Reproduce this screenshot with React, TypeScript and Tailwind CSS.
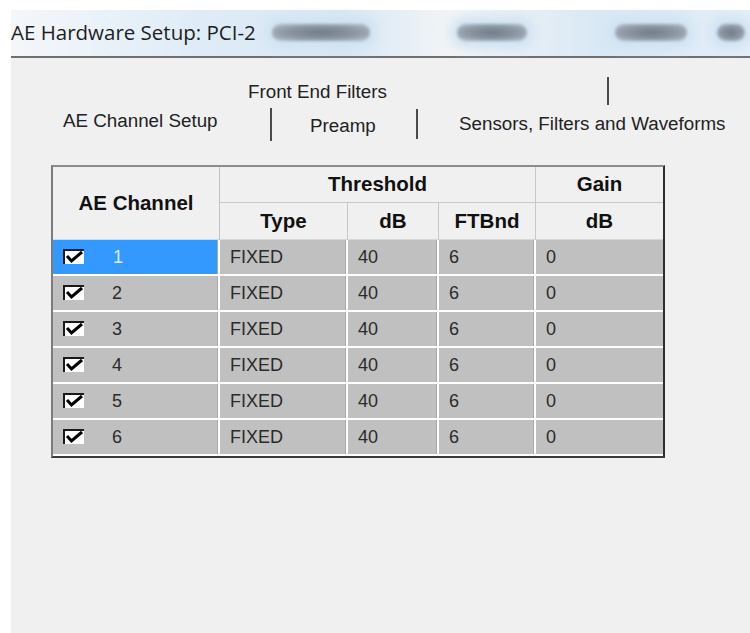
import React from "react";

const rows = [1, 2, 3, 4, 5, 6].map((n) => ({
  channel: n,
  type: "FIXED",
  db: "40",
  ftbnd: "6",
  gain: "0",
}));

// classic sunken check box with a heavy tick
function CheckBox() {
  return (
    <svg width="22" height="16" viewBox="0 0 22 16" className="shrink-0">
      <rect x="1" y="1" width="20" height="14" fill="#ffffff" />
      <path d="M1 15 V1 H21" fill="none" stroke="#1a1a1a" strokeWidth="2" />
      <path d="M4 7 L8.5 12 L19 3" fill="none" stroke="#000000" strokeWidth="3" strokeLinejoin="miter" />
    </svg>
  );
}

function Blob({ className }: { className: string }) {
  return (
    <div
      className={`h-[17px] shrink-0 rounded-full bg-[radial-gradient(ellipse_at_center,#6f7b88_0%,#8e99a5_55%,#b9c6d2_100%)] blur-[1.5px] shadow-[0_0_12px_7px_#cfe2f2] ${className}`}
    />
  );
}

function Sep({ h }: { h: string }) {
  return <div className={`w-[2px] ${h} bg-[#4a4a4a] shrink-0`} />;
}

export default function App() {
  const hdr = "bg-[#f0f0f0] text-[20.5px] font-bold text-[#111] text-center align-middle";
  const cellBase = "pl-[10px] text-left text-[18px] border-b-2 border-white";
  const grey = "bg-[#c0c0c0] text-[#2b2b2b]";
  const divider = "shadow-[inset_-2px_0_0_#ffffff,inset_-3px_0_0_#a9a9a9]";
  const cell = `${cellBase} ${grey} ${divider}`;

  return (
    <div
      className="w-[750px] h-[633px] bg-white pt-[10px] pl-[11px] flex flex-col overflow-hidden"
      style={{ fontFamily: '"Liberation Sans", Arial, sans-serif' }}
    >
      {/* window caption */}
      <div className="h-[46px] shrink-0 flex items-center pb-[2px] bg-[linear-gradient(90deg,#f4f7fa_0%,#dfecf7_25%,#d8e8f5_45%,#f3f5f6_60%,#d8e8f5_80%,#e4eff8_100%)]">
        <div
          className="w-[261px] shrink-0 text-[20.5px] text-[#1e1e1e] whitespace-nowrap"
          style={{ fontFamily: '"Open Sans", "Noto Sans", sans-serif' }}
        >
          AE Hardware Setup: PCI-2
        </div>
        <Blob className="w-[98px]" />
        <Blob className="ml-[87px] w-[70px]" />
        <Blob className="ml-[88px] w-[72px]" />
        <Blob className="ml-[30px] w-[28px]" />
      </div>
      <div className="h-[2px] shrink-0 bg-[#6f6f6f]" />

      {/* dialog body */}
      <div className="flex-1 bg-[#f0f0f1] flex flex-col">
        {/* tab strip, two rows */}
        <div className="text-[18.8px] text-[#222]">
          <div className="mt-[19px] h-[28px] flex items-center">
            <div className="w-[237px] shrink-0" />
            <div className="w-[359px] shrink-0 mt-[2px]">Front End Filters</div>
            <Sep h="h-[28px]" />
          </div>
          <div className="mt-[2px] h-[34px] flex items-center">
            <div className="w-[52px] shrink-0" />
            <div className="w-[207px] shrink-0 -mt-[6px]">AE Channel Setup</div>
            <Sep h="h-[33px]" />
            <div className="w-[144px] shrink-0 pl-[38px] mt-[4px]">Preamp</div>
            <Sep h="h-[30px]" />
            <div className="pl-[41px] whitespace-nowrap">Sensors, Filters and Waveforms</div>
          </div>
        </div>

        {/* channel grid */}
        <div className="ml-[40px] mt-[24px] w-[614px] border-2 border-l-[#7c7c7c] border-t-[#8c8c8c] border-r-[#2e2e2e] border-b-[#3c3c3c]">
          <table className="border-separate border-spacing-0 w-[610px] table-fixed">
            <colgroup>
              <col className="w-[167px]" />
              <col className="w-[128px]" />
              <col className="w-[91px]" />
              <col className="w-[97px]" />
              <col className="w-[127px]" />
            </colgroup>
            <thead>
              <tr className="h-[36px]">
                <th rowSpan={2} className={`${hdr} border-r border-[#c4c4c4] border-b border-b-[#d8d8d8]`}>
                  AE Channel
                </th>
                <th colSpan={3} className={`${hdr} border-r border-b border-[#c8c8c8]`}>
                  Threshold
                </th>
                <th className={`${hdr} border-b border-[#c8c8c8]`}>Gain</th>
              </tr>
              <tr className="h-[37px]">
                <th className={`${hdr} border-r border-b border-[#c8c8c8] border-b-[#d8d8d8]`}>Type</th>
                <th className={`${hdr} border-r border-b border-[#c8c8c8] border-b-[#d8d8d8]`}>dB</th>
                <th className={`${hdr} border-r border-b border-[#c8c8c8] border-b-[#d8d8d8]`}>FTBnd</th>
                <th className={`${hdr} border-b border-b-[#d8d8d8]`}>dB</th>
              </tr>
            </thead>
            <tbody>
              {rows.map((r) => {
                const selected = r.channel === 1;
                return (
                  <tr key={r.channel} className="h-[36px]">
                    <td
                      className={`${cellBase} ${divider} ${selected ? "bg-[#3399ff] text-[#d6eaff]" : grey}`}
                    >
                      <div className="flex items-center">
                        <CheckBox />
                        <span className={selected ? "ml-[28px]" : "ml-[27px]"}>{r.channel}</span>
                      </div>
                    </td>
                    <td className={cell}>{r.type}</td>
                    <td className={cell}>{r.db}</td>
                    <td className={cell}>{r.ftbnd}</td>
                    <td className={`${cellBase} ${grey}`}>{r.gain}</td>
                  </tr>
                );
              })}
            </tbody>
          </table>
        </div>
      </div>
    </div>
  );
}
